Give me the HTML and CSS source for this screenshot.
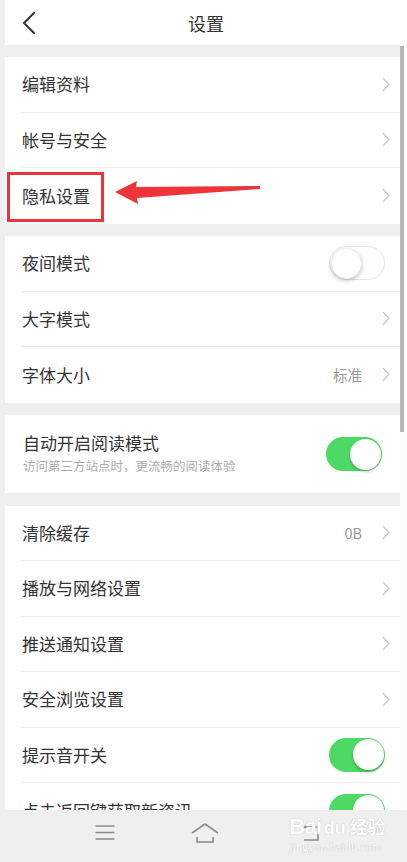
FILE: index.html
```html
<!DOCTYPE html>
<html lang="zh-CN">
<head>
<meta charset="utf-8">
<title>设置</title>
<link rel="stylesheet" href="styles.css">
</head>
<body>
<div class="screen">
  <header class="topbar">
    <div class="topbar-left">
      <svg class="back-icon" width="14" height="22" viewBox="0 0 14 22"><path d="M12 1 L2 11 L12 21" fill="none" stroke="#333" stroke-width="2" stroke-linecap="round" stroke-linejoin="round"/></svg>
    </div>
    <h1 class="title">设置</h1>
    <div class="topbar-right"></div>
  </header>

  <div class="content">
    <main class="list">
      <section class="group">
        <div class="row"><div class="row-inner"><span class="label">编辑资料</span><svg class="chev" width="8" height="15" viewBox="0 0 8 15"><path d="M1 1 L7 7.5 L1 14" fill="none" stroke="#c9c9c9" stroke-width="1.3"/></svg></div></div>
        <div class="row"><div class="row-inner"><span class="label">帐号与安全</span><svg class="chev" width="8" height="15" viewBox="0 0 8 15"><path d="M1 1 L7 7.5 L1 14" fill="none" stroke="#c9c9c9" stroke-width="1.3"/></svg></div></div>
        <div class="row"><div class="row-inner last"><span class="label">隐私设置</span><svg class="chev" width="8" height="15" viewBox="0 0 8 15"><path d="M1 1 L7 7.5 L1 14" fill="none" stroke="#c9c9c9" stroke-width="1.3"/></svg></div></div>
      </section>

      <section class="group">
        <div class="row"><div class="row-inner"><span class="label">夜间模式</span><span class="toggle off"><span class="knob"></span></span></div></div>
        <div class="row"><div class="row-inner"><span class="label">大字模式</span><svg class="chev" width="8" height="15" viewBox="0 0 8 15"><path d="M1 1 L7 7.5 L1 14" fill="none" stroke="#c9c9c9" stroke-width="1.3"/></svg></div></div>
        <div class="row"><div class="row-inner last"><span class="label">字体大小</span><span class="value">标准</span><svg class="chev" width="8" height="15" viewBox="0 0 8 15"><path d="M1 1 L7 7.5 L1 14" fill="none" stroke="#c9c9c9" stroke-width="1.3"/></svg></div></div>
      </section>

      <section class="group group-tall">
        <div class="tall-text">
          <span class="label">自动开启阅读模式</span>
          <span class="sub">访问第三方站点时，更流畅的阅读体验</span>
        </div>
        <span class="toggle on shift"><span class="knob"></span></span>
      </section>

      <section class="group">
        <div class="row"><div class="row-inner"><span class="label">清除缓存</span><span class="value">0B</span><svg class="chev" width="8" height="15" viewBox="0 0 8 15"><path d="M1 1 L7 7.5 L1 14" fill="none" stroke="#c9c9c9" stroke-width="1.3"/></svg></div></div>
        <div class="row"><div class="row-inner"><span class="label">播放与网络设置</span><svg class="chev" width="8" height="15" viewBox="0 0 8 15"><path d="M1 1 L7 7.5 L1 14" fill="none" stroke="#c9c9c9" stroke-width="1.3"/></svg></div></div>
        <div class="row"><div class="row-inner"><span class="label">推送通知设置</span><svg class="chev" width="8" height="15" viewBox="0 0 8 15"><path d="M1 1 L7 7.5 L1 14" fill="none" stroke="#c9c9c9" stroke-width="1.3"/></svg></div></div>
        <div class="row"><div class="row-inner"><span class="label">安全浏览设置</span><svg class="chev" width="8" height="15" viewBox="0 0 8 15"><path d="M1 1 L7 7.5 L1 14" fill="none" stroke="#c9c9c9" stroke-width="1.3"/></svg></div></div>
        <div class="row"><div class="row-inner"><span class="label">提示音开关</span><span class="toggle on"><span class="knob"></span></span></div></div>
        <div class="row"><div class="row-inner last"><span class="label">点击返回键获取新资讯</span><span class="toggle on"><span class="knob"></span></span></div></div>
      </section>
    </main>
    <div class="scrollbar"><div class="thumb"></div></div>
  </div>

  <nav class="navbar">
    <svg class="nav-icon" width="30" height="24" viewBox="0 0 30 24"><path d="M5.5 5 H24.5 M5.5 11.5 H24.5 M5.5 18 H24.5" stroke="#8a8a8a" stroke-width="1.6" fill="none"/></svg>
    <svg class="nav-icon" width="30" height="24" viewBox="0 0 30 24"><path d="M2 12 L15 3 L28 12" stroke="#8a8a8a" stroke-width="1.6" fill="none" stroke-linejoin="round"/><path d="M7 16 V21 H23 V16" stroke="#8a8a8a" stroke-width="1.6" fill="none"/></svg>
    <svg class="nav-icon" width="30" height="24" viewBox="0 0 30 24"><path d="M10 6 H23 V19 H9" stroke="#8a8a8a" stroke-width="1.6" fill="none"/><path d="M13 3 L9.5 6 L13 9" stroke="#8a8a8a" stroke-width="1.6" fill="none"/></svg>
  </nav>

  <div class="watermark">
    <div class="wm-line"><span class="wm-bai">Bai</span><span class="wm-du">du</span><span class="wm-jy">经验</span></div>
    <div class="wm-url">jingyan.baidu.com</div>
  </div>

  <div class="annot-box"></div>
  <svg class="annot-arrow" width="150" height="30" viewBox="0 0 150 30"><polygon points="0,12 22,1 21,7 145,6 145,9 22,18 23,24" fill="#ec3439"/></svg>
</div>
</body>
</html>
```

FILE: styles.css
```css
* { box-sizing: border-box; }
html, body { margin: 0; padding: 0; }
body {
  background: #efefef;
  font-family: "Noto Sans CJK SC", "Noto Sans", sans-serif;
  color: #333;
}
.screen {
  position: relative;
  width: 407px;
  height: 862px;
  overflow: hidden;
  display: flex;
  flex-direction: column;
  background: #efefef;
}
.topbar {
  flex: 0 0 45px;
  margin-left: 5px;
  background: #fff;
  display: grid;
  grid-template-columns: 1fr auto 1fr;
  align-items: center;
}
.topbar-left { display: flex; align-items: center; padding-left: 17px; }
.back-icon { display: block; }
.title {
  margin: 0;
  font-size: 18px;
  font-weight: 400;
  color: #333;
  line-height: 1;
}
.content {
  flex: 1 1 auto;
  display: flex;
  overflow: hidden;
}
.list {
  margin-left: 5px;
  width: 395px;
  flex: 0 0 395px;
  display: flex;
  flex-direction: column;
  gap: 12.5px;
  padding-top: 12px;
}
.group {
  background: #fff;
  flex: 0 0 auto;
}
.row {
  padding-left: 17px;
  height: 55.5px;
}
.row-inner {
  height: 100%;
  display: flex;
  align-items: center;
  border-bottom: 1px solid #ededed;
  padding-right: 10px;
}
.row-inner.last { border-bottom: none; }
.label {
  font-size: 17px;
  color: #333;
  flex: 1 1 auto;
  line-height: 24px;
}
.value {
  font-size: 14.5px;
  color: #9a9a9a;
  margin-right: 20px;
}
.chev { display: block; flex: 0 0 auto; }
.toggle {
  flex: 0 0 auto;
  width: 56px;
  height: 34px;
  border-radius: 17px;
  display: flex;
  align-items: center;
  padding: 0 1.5px;
  margin-right: 5px;
}
.toggle .knob {
  width: 31px;
  height: 31px;
  border-radius: 50%;
  background: #fff;
  box-shadow: 0 2px 3px rgba(0,0,0,0.22);
}
.toggle.on { background: #4cd964; justify-content: flex-end; }
.toggle.off {
  background: #fdfdfd;
  border: 1px solid #e6e6e6;
  justify-content: flex-start;
  padding: 0 1px;
}
.toggle.off .knob { box-shadow: 0 2px 4px rgba(0,0,0,0.2); border: 1px solid #ececec; }
.group-tall {
  height: 78px;
  display: flex;
  align-items: center;
  padding-left: 18px;
  padding-right: 13px;
}
.tall-text {
  flex: 1 1 auto;
  display: flex;
  flex-direction: column;
  gap: 2px;
  padding-bottom: 2px;
}
.sub {
  font-size: 12.5px;
  color: #adadad;
  line-height: 18px;
}
.toggle.shift { margin-right: 5px; }
.scrollbar {
  flex: 0 0 7px;
  background: #fcfcfc;
  padding-top: 1px;
}
.thumb {
  width: 4px;
  height: 386px;
  background: #b7b7b7;
}
.navbar {
  flex: 0 0 52px;
  background: #efefef;
  display: flex;
  align-items: flex-start;
  padding-top: 11px;
  padding-left: 90px;
  gap: 70px;
}
.nav-icon { display: block; }
.nav-icon:last-child { margin-left: 5px; }
.watermark {
  position: absolute;
  left: 289px;
  top: 813px;
  width: 100px;
  color: #fff;
  text-shadow: 0 0 1px #c4c4c4, 0 0 1px #c4c4c4;
  font-family: "Liberation Sans", sans-serif;
}
.wm-line { display: flex; align-items: baseline; line-height: 26px; }
.wm-bai { font-size: 22px; font-weight: 700; letter-spacing: -0.5px; }
.wm-du { font-size: 18px; font-weight: 700; margin-left: 2px; }
.wm-jy { font-size: 18px; margin-left: 4px; font-family: "Noto Sans CJK SC", sans-serif; font-weight: 700; }
.wm-url { font-size: 12px; line-height: 12px; font-family: "Liberation Serif", serif; letter-spacing: 0.2px; }
.annot-box {
  position: absolute;
  left: 7px;
  top: 172px;
  width: 97px;
  height: 50px;
  border: 3px solid #ec3439;
}
.annot-arrow {
  position: absolute;
  left: 115px;
  top: 180px;
}
```
